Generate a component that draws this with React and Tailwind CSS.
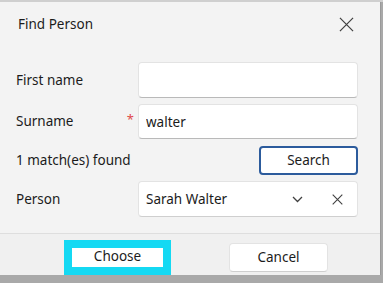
import React, { useState } from 'react';

const CloseIcon = ({ size = 16, stroke = 1.3, className = '' }) => (
  <svg width={size} height={size} viewBox="0 0 16 16" className={className}>
    <path d="M1 1 L15 15 M15 1 L1 15" stroke="currentColor" strokeWidth={stroke} fill="none" />
  </svg>
);

const Chevron = () => (
  <svg width="11" height="7" viewBox="0 0 11 7">
    <path d="M1 1 L5.5 5.5 L10 1" stroke="currentColor" strokeWidth="1.3" fill="none" />
  </svg>
);

const FindPerson = () => {
  const [firstName, setFirstName] = useState('');
  const [surname, setSurname] = useState('walter');

  const inputCls =
    'w-[220px] bg-white border border-[#e3e3e3] border-b-[#b9b9b9] rounded-[4px] px-[7px] text-[13.5px] text-[#1b1b1b] focus:outline-none';

  return (
    <div className="w-[383px] h-[283px] bg-[#a9a9a9] overflow-hidden" style={{ fontFamily: '"Noto Sans", "Open Sans", sans-serif' }}>
      <div className="h-[2px] bg-[#cfcfcf]" />
      <div className="w-[381px] h-[273px] bg-[#f3f3f3] border-r border-[#9a9a9a] flex flex-col">
        <div className="h-[44px] flex items-center justify-between pl-[18px] pr-[26px]">
          <span className="text-[13.5px] text-[#1b1b1b]">Find Person</span>
          <CloseIcon size={15} className="text-[#404040]" />
        </div>

        <div className="flex flex-col pt-[16px] pl-[16px] pr-[22px] gap-[6px]">
          <div className="flex items-center">
            <span className="flex-1 text-[13.5px] text-[#1b1b1b]">First name</span>
            <input
              value={firstName}
              onChange={(e) => setFirstName(e.target.value)}
              className={inputCls + ' h-[36px]'}
            />
          </div>
          <div className="flex items-center">
            <span className="flex-1 text-[13.5px] text-[#1b1b1b]">Surname</span>
            <span className="text-[#e0484a] text-[13px] mr-[4px] -mt-[3px]">*</span>
            <input
              value={surname}
              onChange={(e) => setSurname(e.target.value)}
              className={inputCls + ' h-[35px]'}
            />
          </div>
          <div className="flex items-center mt-[1px]">
            <span className="flex-1 text-[13.5px] text-[#1b1b1b]">1 match(es) found</span>
            <button className="w-[99px] h-[29px] bg-white border-2 border-[#2c5b9c] rounded-[4px] text-[13.5px] text-[#1b1b1b]">
              Search
            </button>
          </div>
          <div className="flex items-center">
            <span className="flex-1 text-[13.5px] text-[#1b1b1b]">Person</span>
            <div className="w-[220px] h-[36px] bg-white border border-[#e3e3e3] border-b-[#cfcfcf] rounded-[4px] flex items-center pl-[7px] pr-[14px]">
              <span className="flex-1 text-[13.5px] text-[#1b1b1b]">Sarah Walter</span>
              <span className="text-[#404040] mr-[29px] mt-[1px]"><Chevron /></span>
              <CloseIcon size={11} stroke={1.6} className="text-[#404040]" />
            </div>
          </div>
        </div>

        <div className="mt-auto h-[42px] border-t border-[#dedede] bg-[#f0f0f0] flex items-center pt-[5px]">
          <button className="ml-[64px] w-[107px] h-[35px] border-[8px] border-[#14d9f3] bg-white text-[13.5px] text-[#1b1b1b] leading-none">
            Choose
          </button>
          <button className="ml-[58px] w-[99px] h-[29px] bg-white border border-[#e3e3e3] border-b-[#cfcfcf] rounded-[4px] text-[13.5px] text-[#1b1b1b]">
            Cancel
          </button>
        </div>
      </div>
    </div>
  );
};

export default function App() {
  return <FindPerson />;
}
